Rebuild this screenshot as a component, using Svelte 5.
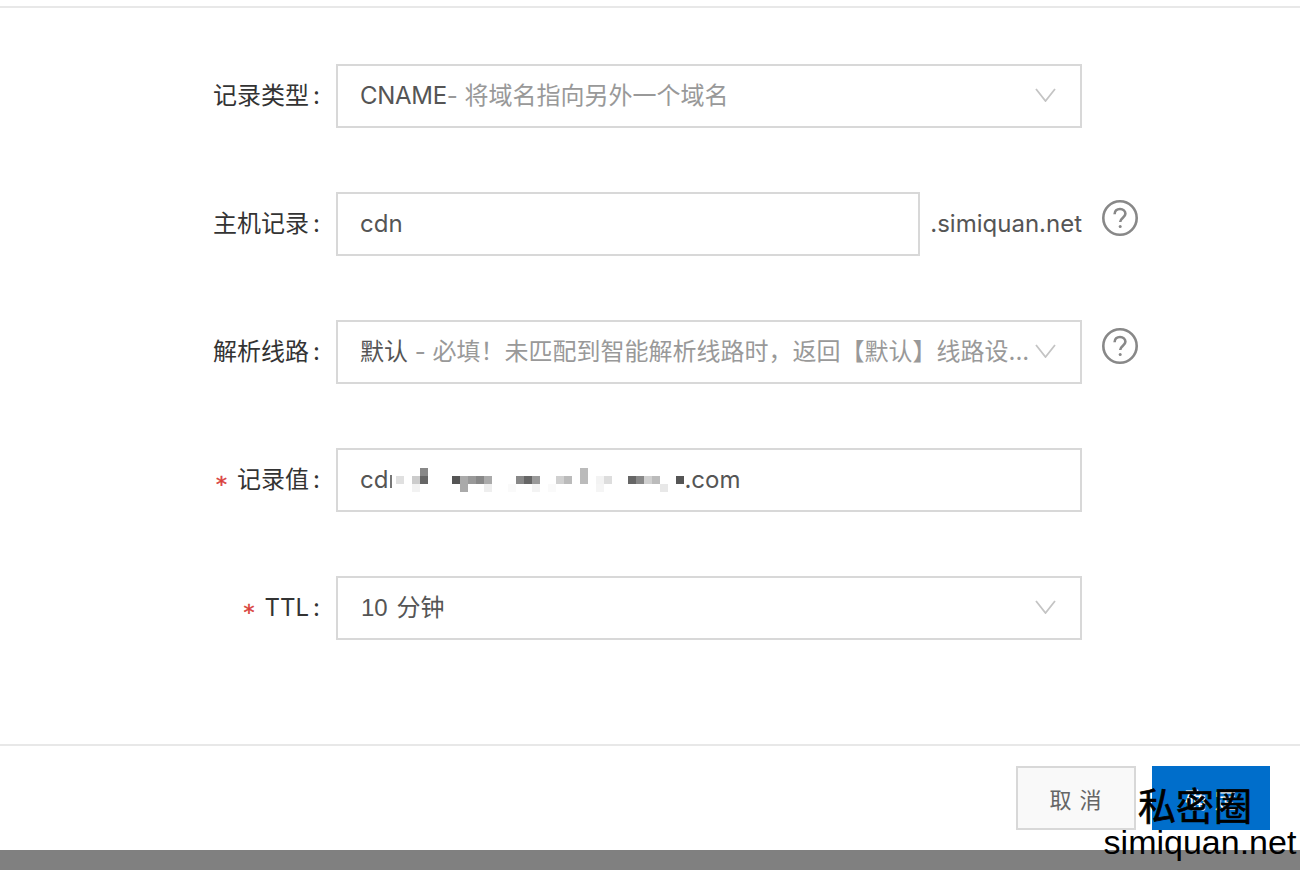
<script>
  const blur = [
    [396,476,'#e0e0e0'],[412,476,'#ccc'],[420,476,'#666'],[420,468,'#888'],[412,484,'#f2f2f2'],
    [452,476,'#555'],[460,476,'#aaa'],[468,476,'#999'],[476,476,'#888'],[484,476,'#aaa'],[460,484,'#aaa'],[484,484,'#eee'],
    [508,484,'#fafafa'],[516,476,'#888'],[524,476,'#666'],[532,476,'#999'],[532,484,'#f3f3f3'],
    [548,484,'#fafafa'],[556,476,'#d0d0d0'],[564,476,'#bbb'],[580,468,'#bbb'],[580,476,'#bbb'],
    [596,476,'#f3f3f3'],[604,476,'#ddd'],[596,484,'#f5f5f5'],
    [628,476,'#666'],[636,476,'#888'],[644,476,'#d0d0d0'],[652,476,'#bbb'],[660,484,'#e8e8e8'],
    [676,476,'#555']
  ];
</script>

<div class="page">
  <div class="dialog">
    <div class="form">
      <div class="row">
        <div class="label">记录类型<span class="colon">:</span></div>
        <div class="control wide select">
          <span class="val tight">CNAME</span><span class="muted">- 将域名指向另外一个域名</span>
          <svg class="chev" viewBox="0 0 21 14"><path d="M1 1 L10.5 13 L20 1" /></svg>
        </div>
      </div>
      <div class="row">
        <div class="label">主机记录<span class="colon">:</span></div>
        <div class="control host"><span class="val">cdn</span></div>
        <div class="suffix">.simiquan.net</div>
        <svg class="help" viewBox="0 0 36 36"><circle cx="18" cy="18" r="16.7" /><path d="M12.6 14.2 C12.6 10.8 15 9 18 9 C21.2 9 23.4 11 23.4 13.8 C23.4 17.6 18.2 17.8 18.2 22" /><circle class="dot" cx="18.2" cy="26.4" r="1.5" /></svg>
      </div>
      <div class="row">
        <div class="label">解析线路<span class="colon">:</span></div>
        <div class="control wide select">
          <span class="val">默认</span><span class="muted">{' - 必填！未匹配到智能解析线路时，返回【默认】线路设...'}</span>
          <svg class="chev" viewBox="0 0 21 14"><path d="M1 1 L10.5 13 L20 1" /></svg>
        </div>
        <svg class="help" viewBox="0 0 36 36"><circle cx="18" cy="18" r="16.7" /><path d="M12.6 14.2 C12.6 10.8 15 9 18 9 C21.2 9 23.4 11 23.4 13.8 C23.4 17.6 18.2 17.8 18.2 22" /><circle class="dot" cx="18.2" cy="26.4" r="1.5" /></svg>
      </div>
      <div class="row">
        <div class="label"><span class="req">*</span>记录值<span class="colon">:</span></div>
        <div class="control wide">
          <span class="val">cd</span><span class="stem"></span>
          <span class="blur">
            {#each blur as b}
              <i style="left:{b[0] - 392}px;top:{b[1] - 468}px;background:{b[2]}"></i>
            {/each}
          </span>
          <span class="val">.com</span>
        </div>
      </div>
      <div class="row">
        <div class="label"><span class="req">*</span>TTL<span class="colon">:</span></div>
        <div class="control wide select">
          <span class="val ttl"><span class="digits">10</span> 分钟</span>
          <svg class="chev" viewBox="0 0 21 14"><path d="M1 1 L10.5 13 L20 1" /></svg>
        </div>
      </div>
    </div>
    <div class="footer">
      <button class="btn cancel">取 消</button>
      <button class="btn ok">确 定</button>
    </div>
  </div>
  <div class="shade"></div>

  <div class="mark">
    <div class="mark-cn">私密圈</div>
    <div class="mark-en">simiquan.net</div>
  </div>
</div>

<style>
  :global(body) { margin: 0; background: #fff; }
  .page {
    position: relative;
    width: 1300px;
    height: 870px;
    overflow: hidden;
    display: flex;
    flex-direction: column;
    font-family: "Inter", "Noto Sans CJK SC", sans-serif;
    font-size: 24px;
    line-height: 30px;
    color: #333;
  }
  .dialog { flex: 1; display: flex; flex-direction: column; border-top: 2px solid #e8e8e8; margin-top: 6px; min-height: 0; }
  .form { padding-top: 56px; display: flex; flex-direction: column; gap: 64px; height: 680px; box-sizing: border-box; }
  .row { display: flex; align-items: center; height: 64px; position: relative; }
  .label { width: 320px; text-align: right; flex: none; margin-right: 16px; color: #333; white-space: nowrap; padding-bottom: 1px; box-sizing: border-box; }
  .colon { margin-left: 4px; }
  .req { color: #d9403a; margin-right: 10px; font-family: "DejaVu Sans", sans-serif; font-size: 22px; line-height: 0; vertical-align: -4px; -webkit-text-stroke: 0.5px #d9403a; }
  .control {
    box-sizing: border-box;
    height: 64px;
    border: 2px solid #d8d8d8;
    padding: 0 22px 1px;
    display: flex;
    align-items: center;
    white-space: nowrap;
    overflow: hidden;
  }
  .wide { width: 746px; flex: none; }
  .host { width: 584px; flex: none; }
  .select { position: relative; }
  .val { color: #555; flex: none; }
  .tight { letter-spacing: -0.3px; }
  .ttl { word-spacing: 2px; padding-left: 1px; }
  .digits { font-family: "Liberation Sans", sans-serif; }
  .muted { color: #999; white-space: pre; }
  .stem { flex: none; width: 2px; height: 13px; margin: 3px 0 0 2px; background: #777; }
  .blur { position: relative; flex: none; width: 292px; height: 24px; }
  .blur i { position: absolute; display: block; width: 8px; height: 8px; }
  .chev { position: absolute; right: 24px; top: 22px; width: 21px; height: 14px; fill: none; stroke: #c4c4c4; stroke-width: 1.8; }
  .suffix { width: 162px; flex: none; text-align: right; color: #555; }
  .help { position: absolute; left: 1102px; top: 8px; width: 36px; height: 36px; fill: none; stroke: #888; stroke-width: 2.6; }
  .help .dot { fill: #888; stroke: none; }
  .footer { border-top: 2px solid #e8e8e8; margin-top: 56px; padding: 20px 30px 0 0; display: flex; justify-content: flex-end; gap: 16px; }
  .btn { box-sizing: border-box; height: 64px; font-size: 22px; font-family: "Inter", "Noto Sans CJK SC", sans-serif; letter-spacing: 1px; padding: 0; }
  .cancel { width: 120px; background: #f9f9f9; border: 2px solid #d8d8d8; color: #666; }
  .ok { width: 118px; background: #006ecb; border: 0; color: #fff; }
  .shade { height: 20px; flex: none; background: #808080; }
  .mark { position: absolute; right: 0; top: 782px; width: 200px; text-align: center; color: #000; font-family: "Liberation Sans", "Noto Sans CJK SC", sans-serif; }
  .mark-cn { font-size: 38px; line-height: 44px; margin-right: 10px; font-family: "Noto Sans CJK SC", sans-serif; -webkit-text-stroke: 0.7px #000; }
  .mark-en { font-size: 34px; line-height: 34px; margin-top: -1px; }
</style>
